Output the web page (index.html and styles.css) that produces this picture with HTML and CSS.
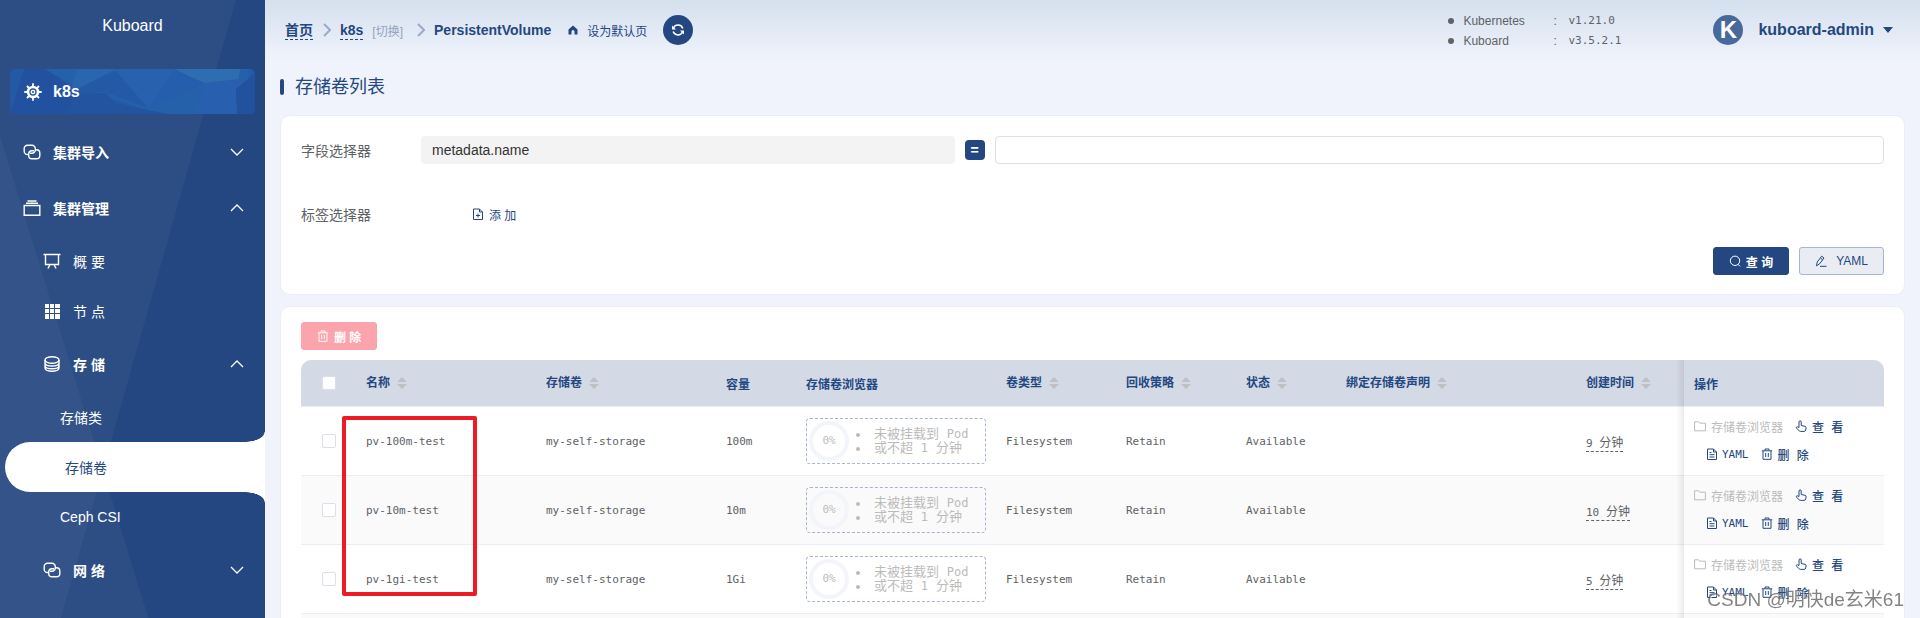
FILE: index.html
```html
<!DOCTYPE html>
<html lang="zh-CN">
<head>
    <meta charset="UTF-8">
    <meta name="viewport" content="width=device-width, initial-scale=1.0">
    <title>Kuboard - PersistentVolume</title>
    <link rel="stylesheet" href="styles.css">
</head>
<body>

<!-- icons -->
<svg class="sprite" aria-hidden="true">
    <symbol id="i-wheel" viewBox="0 0 18 18">
        <path d="M9 .3v17.400M.3 9h17.400M3 3l12 12M15 3L3 15" stroke-width="1.800"/>
        <circle cx="9" cy="9" r="6.300" fill="currentColor" stroke="none"/>
        <circle cx="9" cy="9" r="3.700" fill="#2459a6" stroke="none"/>
        <circle cx="9" cy="9" r="1.700" stroke-width="1.300"/>
    </symbol>
    <symbol id="i-link" viewBox="0 0 18 18">
        <path d="M6 11.500H4.500A3.300 3.300 0 0 1 1.200 8.200V5.500A3.300 3.300 0 0 1 4.500 2.200H9A3.300 3.300 0 0 1 12.300 5.500V7A3.300 3.300 0 0 1 9 10.300H7"/>
        <path d="M12 6.700H13.500A3.300 3.300 0 0 1 16.800 10V12.500A3.300 3.300 0 0 1 13.500 15.800H9A3.300 3.300 0 0 1 5.700 12.500V11A3.300 3.300 0 0 1 9 7.700H11"/>
    </symbol>
    <symbol id="i-files" viewBox="0 0 18 18">
        <path d="M1.200 6.500h15.600v9.800H1.200zM3 4.200h12M4.500 2h9"/>
    </symbol>
    <symbol id="i-board" viewBox="0 0 18 18">
        <path d="M.5 2.500h17M2.500 2.500v10h13v-10M7 12.500l-2 4M11 12.500l2 4"/>
    </symbol>
    <symbol id="i-grid" viewBox="0 0 18 18">
        <path fill="currentColor" stroke="none" d="M2 2h4v4H2zM7 2h4v4H7zM12 2h5v4h-5zM2 7h4v4H2zM7 7h4v4H7zM12 7h5v4h-5zM2 12h4v5H2zM7 12h4v5H7zM12 12h5v5h-5z"/>
    </symbol>
    <symbol id="i-coin" viewBox="0 0 18 18">
        <ellipse cx="9" cy="5" rx="7" ry="3.300"/>
        <path d="M2 5v8c0 1.800 3.100 3.200 7 3.200s7-1.400 7-3.200V5M2 8c0 1.800 3.100 3 7 3s7-1.200 7-3M2 10.700c0 1.800 3.100 3 7 3s7-1.200 7-3"/>
    </symbol>
    <symbol id="i-down" viewBox="0 0 14 14"><path d="M1 4l6 6 6-6"/></symbol>
    <symbol id="i-up" viewBox="0 0 14 14"><path d="M1 10l6-6 6 6"/></symbol>
    <symbol id="i-right" viewBox="0 0 8 14"><path d="M1 1l6 6-6 6"/></symbol>
    <symbol id="i-home" viewBox="0 0 10 10">
        <path fill="currentColor" stroke="none" d="M5 .5L.5 4.500V9.500h3V6.500a1.500 1.500 0 0 1 3 0v3h3v-5z"/>
    </symbol>
    <symbol id="i-refresh" viewBox="0 0 14 14">
        <path d="M2.500 5A5 5 0 0 1 11.800 5.500M11.500 9A5 5 0 0 1 2.200 8.500"/>
        <path d="M1 2.500v4h4zM13 11.500v-4H9z" fill="currentColor" stroke="none"/>
    </symbol>
    <symbol id="i-add" viewBox="0 0 12 12">
        <path d="M1.500 1h6L10.500 4v7.500h-9zM7.500 1v3h3M6 5.500v4M4 7.500h4"/>
    </symbol>
    <symbol id="i-doc" viewBox="0 0 12 12">
        <path d="M1.500 1h6L10.500 4v7.500h-9zM7.500 1v3h3M3.500 4.500h2M3.500 6.700h5M3.500 9h5"/>
    </symbol>
    <symbol id="i-search" viewBox="0 0 12 12">
        <circle cx="6" cy="5.800" r="4.700"/><path d="M9 9.300l2 2"/>
    </symbol>
    <symbol id="i-edit" viewBox="0 0 12 12">
        <path d="M1.500 10.800l.7-3.800L6.700 1.200 9 3 4.500 8.900zM5.500 3l2.200 1.800M5 11.300h6.500"/>
    </symbol>
    <symbol id="i-trash" viewBox="0 0 12 12">
        <path d="M.8 2.800h10.400M4 2.500V1h4v1.500M2 3v8.300h8V3M4.700 5v4M7.300 5v4"/>
    </symbol>
    <symbol id="i-folder" viewBox="0 0 12 12">
        <path d="M.6 1.800h4l1.400 1.400h5.400v7.600H.6z"/>
    </symbol>
    <symbol id="i-hand" viewBox="0 0 12 12">
        <path d="M4 7.500V2a1.100 1.100 0 0 1 2.200 0v3.500L10 6.300c.8.200 1.200.7 1.100 1.500l-.4 2.200c-.2.800-.7 1.400-1.600 1.400H5.800c-.8 0-1.400-.3-1.900-.9L1.200 7.900c0-.9 1-1.400 1.700-.9z"/>
    </symbol>
    <symbol id="i-sort" viewBox="0 0 10 12">
        <path fill="#c0c0c4" stroke="none" d="M5 0l5 5H0zM5 12L0 7h10z"/>
    </symbol>
</svg>

<div class="layout">
    <aside class="sidebar">
        <div class="logo">Kuboard</div>
        <a class="cluster" href="#">
            <svg class="cluster-bg" viewBox="0 0 245 45" preserveAspectRatio="none">
                <path fill="#2560ab" d="M35 0H240L235 45H150L70 20z"/>
                <path fill="#2a66b0" d="M67 0H105L60 24z"/>
                <path fill="#2862ae" d="M105 0H165L138 39z"/>
                <path fill="#2f6db1" d="M165 0H230L228 16 195 15z"/>
                <path fill="#2459a8" d="M105 2L138 39 96 23 60 24z"/>
                <path fill="#255eac" d="M165 2L195 14 138 39z"/>
                <path fill="#285fae" d="M195 14L245 8V45H183z"/>
                <path fill="#22529f" d="M0 45L14 0H35L70 24 55 45z"/>
                <path fill="#22549f" d="M70 25L96 24 105 34 157 45H55z"/>
                <path fill="#22519e" d="M245 4L226 20 227 45H245z"/>
            </svg>
            <svg class="ico18"><use href="#i-wheel"/></svg>
            <span>k8s</span>
        </a>
        <nav class="menu">
            <a class="menu-title" href="#"><svg class="ico18"><use href="#i-link"/></svg><span>集群导入</span><svg class="arrow"><use href="#i-down"/></svg></a>
            <a class="menu-title" href="#"><svg class="ico18"><use href="#i-files"/></svg><span>集群管理</span><svg class="arrow"><use href="#i-up"/></svg></a>
            <a class="menu-item level2" href="#"><svg class="ico18"><use href="#i-board"/></svg><span>概 要</span></a>
            <a class="menu-item level2" href="#"><svg class="ico18"><use href="#i-grid"/></svg><span>节 点</span></a>
            <a class="menu-title level2" href="#"><svg class="ico18"><use href="#i-coin"/></svg><span>存 储</span><svg class="arrow"><use href="#i-up"/></svg></a>
            <a class="menu-item level3" href="#">存储类</a>
            <a class="menu-item level3 active" href="#">存储卷</a>
            <a class="menu-item level3" href="#">Ceph CSI</a>
            <a class="menu-title level2" href="#"><svg class="ico18"><use href="#i-link"/></svg><span>网 络</span><svg class="arrow"><use href="#i-down"/></svg></a>
        </nav>
    </aside>

    <main class="main">
        <header class="header">
            <div class="breadcrumb">
                <a class="crumb" href="#">首页</a>
                <svg class="sep"><use href="#i-right"/></svg>
                <a class="crumb" href="#">k8s</a>
                <a class="switch" href="#">[切换]</a>
                <svg class="sep"><use href="#i-right"/></svg>
                <b>PersistentVolume</b>
                <a class="set-home" href="#"><svg class="ico10"><use href="#i-home"/></svg>设为默认页</a>
                <button class="refresh" aria-label="刷新"><svg class="ico14"><use href="#i-refresh"/></svg></button>
            </div>
            <ul class="versions">
                <li><span class="v-name">Kubernetes</span><span class="v-colon">:</span><span class="mono">v1.21.0</span></li>
                <li><span class="v-name">Kuboard</span><span class="v-colon">:</span><span class="mono">v3.5.2.1</span></li>
            </ul>
            <button class="user"><span class="avatar">K</span>kuboard-admin<i class="caret"></i></button>
        </header>

        <h1 class="page-title">存储卷列表</h1>

        <section class="card filter">
            <div class="form-row fields">
                <label for="field">字段选择器</label>
                <input class="field-name" id="field" type="text" value="metadata.name" readonly>
                <button class="equal">=</button>
                <input class="field-value" type="text" aria-label="字段值">
            </div>
            <div class="form-row labels">
                <span class="label">标签选择器</span>
                <button class="add"><svg class="ico12"><use href="#i-add"/></svg>添 加</button>
            </div>
            <div class="actions">
                <button class="btn primary"><svg class="ico12"><use href="#i-search"/></svg>查 询</button>
                <button class="btn plain"><svg class="ico12"><use href="#i-edit"/></svg>YAML</button>
            </div>
        </section>

        <section class="card list">
            <button class="btn danger"><svg class="ico12"><use href="#i-trash"/></svg>删 除</button>
            <div class="table-wrap">
                <table>
                    <colgroup>
                        <col class="w55"><col class="w180"><col class="w180"><col class="w80"><col class="w200">
                        <col class="w120"><col class="w120"><col class="w100"><col><col class="w108"><col class="w200">
                    </colgroup>
                    <thead>
                        <tr>
                            <th class="check"><input type="checkbox" aria-label="全选"></th>
                            <th class="sortable">名称<svg class="sort"><use href="#i-sort"/></svg></th>
                            <th class="sortable">存储卷<svg class="sort"><use href="#i-sort"/></svg></th>
                            <th>容量</th>
                            <th>存储卷浏览器</th>
                            <th class="sortable">卷类型<svg class="sort"><use href="#i-sort"/></svg></th>
                            <th class="sortable">回收策略<svg class="sort"><use href="#i-sort"/></svg></th>
                            <th class="sortable">状态<svg class="sort"><use href="#i-sort"/></svg></th>
                            <th class="sortable">绑定存储卷声明<svg class="sort"><use href="#i-sort"/></svg></th>
                            <th class="sortable">创建时间<svg class="sort"><use href="#i-sort"/></svg></th>
                            <th class="ops">操作</th>
                        </tr>
                    </thead>
                    <tbody>
                        <tr>
                            <td class="check"><input type="checkbox" aria-label="pv-100m-test"></td>
                            <td>pv-100m-test</td>
                            <td>my-self-storage</td>
                            <td>100m</td>
                            <td><div class="browser"><span class="ring">0%</span><ul><li>未被挂载到 <span>Pod</span></li><li>或不超 <span>1</span> 分钟</li></ul></div></td>
                            <td>Filesystem</td>
                            <td>Retain</td>
                            <td>Available</td>
                            <td></td>
                            <td><span class="age">9 <span class="zh">分钟</span></span></td>
                            <td class="ops">
                                <div><button class="op" disabled><svg class="ico12"><use href="#i-folder"/></svg>存储卷浏览器</button><button class="op bold"><svg class="ico12"><use href="#i-hand"/></svg>查 看</button></div>
                                <div class="second"><button class="op yaml"><svg class="ico12"><use href="#i-doc"/></svg>YAML</button><button class="op bold"><svg class="ico12"><use href="#i-trash"/></svg>删 除</button></div>
                            </td>
                        </tr>
                        <tr>
                            <td class="check"><input type="checkbox" aria-label="pv-10m-test"></td>
                            <td>pv-10m-test</td>
                            <td>my-self-storage</td>
                            <td>10m</td>
                            <td><div class="browser"><span class="ring">0%</span><ul><li>未被挂载到 <span>Pod</span></li><li>或不超 <span>1</span> 分钟</li></ul></div></td>
                            <td>Filesystem</td>
                            <td>Retain</td>
                            <td>Available</td>
                            <td></td>
                            <td><span class="age">10 <span class="zh">分钟</span></span></td>
                            <td class="ops">
                                <div><button class="op" disabled><svg class="ico12"><use href="#i-folder"/></svg>存储卷浏览器</button><button class="op bold"><svg class="ico12"><use href="#i-hand"/></svg>查 看</button></div>
                                <div class="second"><button class="op yaml"><svg class="ico12"><use href="#i-doc"/></svg>YAML</button><button class="op bold"><svg class="ico12"><use href="#i-trash"/></svg>删 除</button></div>
                            </td>
                        </tr>
                        <tr>
                            <td class="check"><input type="checkbox" aria-label="pv-1gi-test"></td>
                            <td>pv-1gi-test</td>
                            <td>my-self-storage</td>
                            <td>1Gi</td>
                            <td><div class="browser"><span class="ring">0%</span><ul><li>未被挂载到 <span>Pod</span></li><li>或不超 <span>1</span> 分钟</li></ul></div></td>
                            <td>Filesystem</td>
                            <td>Retain</td>
                            <td>Available</td>
                            <td></td>
                            <td><span class="age">5 <span class="zh">分钟</span></span></td>
                            <td class="ops">
                                <div><button class="op" disabled><svg class="ico12"><use href="#i-folder"/></svg>存储卷浏览器</button><button class="op bold"><svg class="ico12"><use href="#i-hand"/></svg>查 看</button></div>
                                <div class="second"><button class="op yaml"><svg class="ico12"><use href="#i-doc"/></svg>YAML</button><button class="op bold"><svg class="ico12"><use href="#i-trash"/></svg>删 除</button></div>
                            </td>
                        </tr>
                        <tr><td></td><td></td><td></td><td></td><td></td><td></td><td></td><td></td><td></td><td></td><td class="ops"></td></tr>
                    </tbody>
                </table>
                <!-- red frame round the names -->
                <div class="highlight"></div>
            </div>
        </section>
    </main>
</div>
<div class="watermark">CSDN @明快de玄米61</div>

</body>
</html>
```
FILE: styles.css
```css
* {
    box-sizing: border-box;
}

body {
    margin: 0;
    height: 100vh;
    overflow: hidden;
    font-family: "Liberation Sans", "Noto Sans CJK SC", sans-serif;
    font-size: 14px;
    color: #606266;
    background-color: #f0f3fc;
}

a {
    color: inherit;
    text-decoration: none;
}

button {
    padding: 0;
    border: none;
    background: none;
    font-family: inherit;
    cursor: pointer;
}

svg {
    flex-shrink: 0;
    fill: none;
    stroke: currentColor;
}

.sprite {
    position: absolute;
    width: 0;
    height: 0;
}

.ico18 { width: 18px; height: 18px; stroke-width: 1.4; }
.ico14 { width: 14px; height: 14px; stroke-width: 1.5; }
.ico12 { width: 12px; height: 12px; }
.ico10 { width: 10px; height: 10px; }

.mono {
    font-family: "DejaVu Sans Mono", monospace;
    font-size: 11px;
}

.layout {
    display: flex;
    height: 100vh;
}

/* sidebar */
.sidebar {
    position: relative;
    z-index: 0;
    flex: 0 0 265px;
    overflow: hidden;
    background-color: #244781;
    color: #fff;
}

.sidebar::before,
.sidebar::after {
    content: "";
    position: absolute;
    z-index: -1;
    inset: 0;
    background-color: rgba(255, 255, 255, 0.04);
}

.sidebar::before {
    clip-path: polygon(0 0, 89% 0, 23% 100%, 0 100%);
}

.sidebar::after {
    clip-path: polygon(0 22%, 56% 100%, 0 100%);
}

.logo {
    padding: 16px 0 33px;
    font-size: 16px;
    line-height: 20px;
    text-align: center;
}

.cluster {
    position: relative;
    z-index: 0;
    display: flex;
    align-items: center;
    gap: 11px;
    height: 45px;
    margin: 0 10px 10px;
    padding-left: 14px;
    border-radius: 5px;
    overflow: hidden;
    background-color: #2459a6;
    font-size: 16px;
    font-weight: bold;
}

.cluster-bg {
    position: absolute;
    z-index: -1;
    inset: 0;
    width: 100%;
    height: 100%;
    stroke: none;
}

.menu-title,
.menu-item {
    display: flex;
    align-items: center;
    gap: 12px;
    padding: 0 21px 0 23px;
}

.menu-title {
    height: 56px;
    font-weight: bold;
}

.menu-item {
    height: 50px;
}

.menu .level2 { padding-left: 43px; }
.menu .level3 { padding-left: 60px; }

.arrow {
    width: 14px;
    height: 14px;
    margin-left: auto;
    stroke-width: 1.3;
}

.menu-item.active {
    position: relative;
    margin-left: 5px;
    border-radius: 25px 0 0 25px;
    background-color: #fff;
    color: #244781;
}

.active::before,
.active::after {
    content: "";
    position: absolute;
    right: 0;
    width: 20px;
    height: 10px;
}

.active::before {
    bottom: 100%;
    background: radial-gradient(ellipse 20px 10px at 0 0, transparent 95%, #fff 100%);
}

.active::after {
    top: 100%;
    background: radial-gradient(ellipse 20px 10px at 0 100%, transparent 95%, #fff 100%);
}

/* main */
.main {
    flex: 1;
    min-width: 0;
    overflow: hidden;
}

.header {
    display: flex;
    align-items: center;
    height: 60px;
    padding: 0 27px 0 20px;
    background: linear-gradient(#d4e0ed, #f0f3fc);
    color: #244781;
}

.breadcrumb {
    display: flex;
    align-items: center;
    margin-right: auto;
}

.crumb {
    font-weight: bold;
    line-height: 18px;
    border-bottom: 1px dashed #244781;
}

.sep {
    width: 8px;
    height: 14px;
    margin: 0 9px 0 10px;
    stroke-width: 2;
    color: #9aabc9;
}

.switch {
    margin: 0 4px 0 9px;
    font-size: 12px;
    color: #92a3c0;
}

.set-home {
    display: flex;
    align-items: center;
    gap: 9px;
    margin: 0 16px 0 17px;
    font-size: 12px;
}

.refresh {
    display: flex;
    align-items: center;
    justify-content: center;
    width: 30px;
    height: 30px;
    border-radius: 50%;
    background-color: #244781;
    color: #fff;
}

.versions {
    margin: 0 92px 0 0;
    padding: 1px 0 0;
    list-style: none;
    font-size: 12px;
    line-height: 20px;
    color: #606266;
}

.versions li {
    display: flex;
    align-items: center;
}

.versions li::before {
    content: "";
    width: 6px;
    height: 6px;
    margin-right: 9px;
    border-radius: 50%;
    background-color: #606266;
}

.v-name { width: 90px; }
.v-colon { width: 15px; }
.versions .mono { min-width: 53px; }

.user {
    display: flex;
    align-items: center;
    font-size: 16px;
    font-weight: bold;
    color: #244781;
}

.avatar {
    width: 30px;
    height: 30px;
    margin-right: 15px;
    border-radius: 50%;
    background-color: #47699b;
    color: #fff;
    font-size: 24px;
    line-height: 30px;
}

.caret {
    margin-left: 9px;
    border: 5px solid transparent;
    border-top: 6px solid #244781;
    border-bottom: none;
}

.page-title {
    display: flex;
    align-items: center;
    gap: 11px;
    margin: 14px 15px 15px;
    font-size: 18px;
    font-weight: normal;
    line-height: 26px;
    color: #244781;
}

.page-title::before {
    content: "";
    width: 4px;
    height: 16px;
    border-radius: 2px;
    background-color: #244781;
}

.card {
    margin: 0 15px 11px;
    border: 1px solid #ebeef5;
    border-radius: 10px;
    background-color: #fff;
}

/* filter */
.filter {
    padding: 20px 20px 19px;
}

.form-row {
    display: flex;
    align-items: center;
    height: 28px;
}

.fields {
    display: grid;
    grid-template-columns: 110px 3fr 20px 5fr;
    gap: 10px;
}

.form-row input {
    width: 100%;
    min-width: 0;
    height: 28px;
    padding: 0 10px;
    border: 1px solid #dcdfe6;
    border-radius: 4px;
    font-family: inherit;
    font-size: 14px;
    color: #333;
}

.form-row .field-name {
    border-color: #f3f3f3;
    background-color: #f3f3f3;
}

.equal {
    width: 20px;
    height: 20px;
    border-radius: 4px;
    background-color: #244781;
    color: #fff;
    font-size: 14px;
    font-weight: bold;
    line-height: 20px;
}

.labels {
    margin: 36px 0 19px;
}

.label {
    width: 120px;
}

.add {
    display: flex;
    align-items: center;
    gap: 5px;
    margin-left: 51px;
    font-size: 12px;
    color: #244781;
}

.actions {
    display: flex;
    justify-content: flex-end;
    gap: 10px;
}

.btn {
    display: flex;
    align-items: center;
    gap: 5px;
    height: 28px;
    padding: 0 15px;
    border: 1px solid #244781;
    border-radius: 3px;
    font-size: 12px;
}

.primary {
    background-color: #244781;
    color: #fff;
    font-weight: bold;
}

.plain {
    gap: 9px;
    border-color: #a7b5cd;
    background-color: #e9edf3;
    color: #244781;
}

.danger {
    border-color: #fba4ab;
    background-color: #fba4ab;
    color: #fff;
    font-weight: bold;
}

/* list */
.list {
    padding: 15px 20px;
}

.table-wrap {
    position: relative;
    margin-top: 10px;
}

table {
    width: 100%;
    border-collapse: separate;
    border-spacing: 0;
    table-layout: fixed;
}

.w55 { width: 55px; }
.w80 { width: 80px; }
.w100 { width: 100px; }
.w108 { width: 108px; }
.w120 { width: 120px; }
.w180 { width: 180px; }
.w200 { width: 200px; }

th,
td {
    padding: 0 10px;
    border-bottom: 1px solid #ebeef5;
    text-align: left;
    white-space: nowrap;
}

th {
    height: 47px;
    background-color: #d3d9e5;
    font-size: 12px;
    color: #244781;
}

th.sortable {
    padding: 0 0 4px 10px;
}

th:first-child { border-top-left-radius: 10px; }
th:last-child { border-top-right-radius: 10px; }

.sort {
    width: 10px;
    height: 12px;
    margin-left: 7px;
    vertical-align: middle;
}

td {
    height: 69px;
    font-family: "DejaVu Sans Mono", "Noto Sans CJK SC", monospace;
    font-size: 11px;
}

tbody tr:nth-child(even) td {
    background-color: #fafafa;
}

th.check,
td.check {
    padding: 0 0 0 21px;
}

.check input {
    display: block;
    appearance: none;
    width: 14px;
    height: 14px;
    margin: 0;
    border: 1px solid #dcdfe6;
    border-radius: 2px;
    background-color: #fff;
}

.browser {
    display: flex;
    align-items: center;
    width: 180px;
    height: 46px;
    padding-left: 2px;
    border: 1px dashed #a5b4cf;
    border-radius: 4px;
    color: #bbb;
}

.ring {
    width: 40px;
    height: 40px;
    border: 4px solid #f4f5fa;
    border-radius: 50%;
    line-height: 32px;
    text-align: center;
}

.browser ul {
    margin: 0;
    padding-left: 7px;
    list-style: none;
    font-size: 13px;
    line-height: 14px;
}

.browser li::before {
    content: "";
    display: inline-block;
    width: 4px;
    height: 4px;
    margin-right: 14px;
    border-radius: 50%;
    background-color: #bbb;
    vertical-align: middle;
}

.browser li span {
    font-size: 12px;
}

.age {
    padding-bottom: 1px;
    border-bottom: 1px dashed #606266;
}

.zh {
    font-size: 12px;
}

.ops {
    position: relative;
}

td.ops {
    padding-bottom: 2px;
}

/* shadow of the fixed column */
.ops::before {
    content: "";
    position: absolute;
    top: 0;
    right: 100%;
    bottom: -1px;
    width: 8px;
    background: linear-gradient(to right, transparent, rgba(0, 0, 0, 0.08));
}

.ops div {
    display: flex;
    gap: 12px;
    height: 28px;
}

.ops .second {
    padding-left: 12px;
}

.op {
    display: flex;
    align-items: center;
    gap: 5px;
    font-size: 12px;
    color: #244781;
}

.op:disabled {
    color: #bbb;
}

.op.bold {
    font-weight: 500;
}

.op.yaml {
    gap: 4px;
    font-size: 11px;
}

.highlight {
    position: absolute;
    top: 56px;
    left: 41px;
    width: 135px;
    height: 180px;
    border: 4px solid #ed1c24;
    border-radius: 2px;
}

.watermark {
    position: fixed;
    right: 16px;
    bottom: 4px;
    font-size: 19px;
    line-height: 28px;
    color: rgba(90, 90, 90, 0.75);
    text-shadow: 1px 1px 0 rgba(255, 255, 255, 0.6);
}
```
